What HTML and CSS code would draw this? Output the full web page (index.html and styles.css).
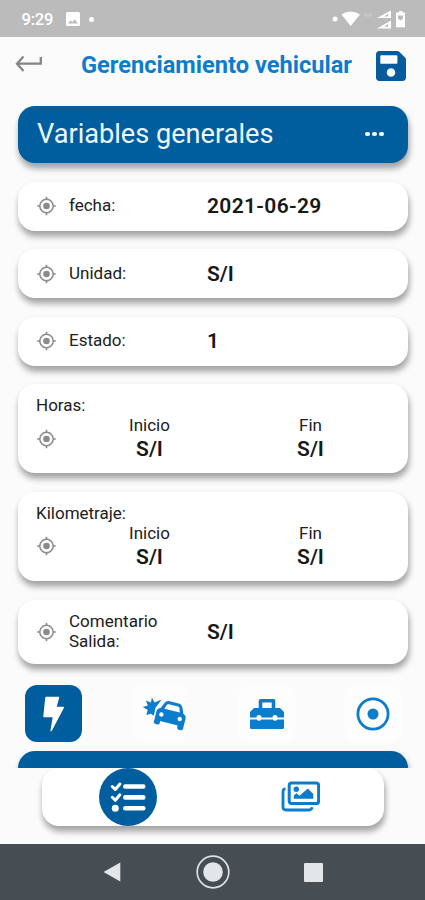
FILE: index.html
```html
<!DOCTYPE html>
<html lang="es">
<head>
<meta charset="utf-8">
<title>Gerenciamiento vehicular</title>
<link rel="stylesheet" href="styles.css">
</head>
<body>
<svg class="defs" width="0" height="0">
  <symbol id="target" viewBox="0 0 20 20">
    <circle cx="10.500" cy="10" r="6.700" fill="none" stroke="currentColor" stroke-width="1.500"/>
    <circle cx="10.500" cy="10" r="3.300" fill="currentColor"/>
    <path d="M10.500 .7v2.800M10.500 16.500v2.800M1.200 10h2.800M17 10h2.800" stroke="currentColor" stroke-width="1.600"/>
  </symbol>
</svg>
<div class="phone">
  <div class="status">
    <span class="clock">9:29</span>
    <svg class="picture" viewBox="0 0 14 14"><path fill="#fff" fill-rule="evenodd" d="M1.500 0h11Q14 0 14 1.500v11Q14 14 12.500 14h-11Q0 14 0 12.500v-11Q0 0 1.500 0zM2 11.500h10L8.700 7.300 6.300 10.200 4.500 8.300z"/></svg>
    <i class="dot"></i>
    <svg class="signals" viewBox="0 0 76 22">
      <g fill="#fff">
        <circle cx="5" cy="11" r="2.500"/>
        <path d="M11.500 6.500Q20.500 .5 30 6.500L20.700 18z"/>
        <path opacity=".2" d="M34 5.500h8v3h-8z"/>
        <path fill-rule="evenodd" d="M47 10L61 2.500v7.500zM54 8.500h4V5.700zM47 20.500l14-8v8zM54 18.800h4V16z"/>
        <path d="M66.500 4.500h2.500V3h3.500v1.500h2.500v14.700h-9V4.500z"/>
      </g>
      <path fill="#bbb" d="M68 7.500h5v3l-2.500 2-2.500-2z"/>
    </svg>
  </div>
  <header class="header">
    <svg class="back" viewBox="0 0 28 18"><path d="M8.500 1.500L2 8.700l6.500 7.200M2.300 8.700h23.500V2" fill="none" stroke="#858585" stroke-width="2.300"/></svg>
    <h1>Gerenciamiento vehicular</h1>
    <svg class="save" viewBox="0 32 448 448"><path fill="#075b9d" d="M433.900 129.900l-83.800-83.800A48 48 0 0 0 316.100 32H48C21.500 32 0 53.500 0 80v352c0 26.500 21.500 48 48 48h352c26.500 0 48-21.500 48-48V163.900a48 48 0 0 0-14.100-34zM224 416a64 64 0 1 1 0-128 64 64 0 0 1 0 128zm96-304.500V212a12 12 0 0 1-12 12H76a12 12 0 0 1-12-12V108a12 12 0 0 1 12-12h228.500l8.500 3.500 3.500 3.500a12 12 0 0 1 3.500 8.500z"/></svg>
  </header>
  <main class="content">
    <section class="banner">
      <h2>Variables generales</h2>
      <span class="more"><i></i><i></i><i></i></span>
    </section>
    <section class="card row"><svg class="target"><use href="#target"/></svg><span class="label">fecha:</span><b class="date">2021-06-29</b></section>
    <section class="card row"><svg class="target"><use href="#target"/></svg><span class="label">Unidad:</span><b>S/I</b></section>
    <section class="card row"><svg class="target"><use href="#target"/></svg><span class="label">Estado:</span><b>1</b></section>
    <section class="card range">
      <span class="range-title">Horas:</span>
      <svg class="target"><use href="#target"/></svg>
      <div class="value"><span>Inicio</span><b>S/I</b></div>
      <div class="value"><span>Fin</span><b>S/I</b></div>
    </section>
    <section class="card range">
      <span class="range-title">Kilometraje:</span>
      <svg class="target"><use href="#target"/></svg>
      <div class="value"><span>Inicio</span><b>S/I</b></div>
      <div class="value"><span>Fin</span><b>S/I</b></div>
    </section>
    <section class="card row tall"><svg class="target"><use href="#target"/></svg><span class="label">Comentario Salida:</span><b>S/I</b></section>
    <nav class="tabs">
      <span class="tab active"><svg width="24" height="36" viewBox="0 0 24 36"><path fill="#fff" stroke="#fff" stroke-width="1.500" stroke-linejoin="round" d="M4 1.500h12.500L13.700 11.500H21.300L9.200 34.500 11.500 20.500H2z"/></svg></span>
      <span class="tab crash"><svg width="46" height="38" viewBox="0 0 46 38">
        <path fill="#0c7dcc" d="M9.900 2.500L12.500 7.500l7-3-1.500 2.200-4.500 6-1.700 8-3-2L4.300 20l1.400-5L.8 12l5-1.500L3.900 5.500l5 2z"/>
        <g transform="translate(29 20) rotate(14)">
          <path fill="#0c7dcc" fill-rule="evenodd" d="M-9.500-9.500Q-8-13-4.500-13H4.500Q8-13 9.500-9.500L11.500-4.500Q15-3 15 0V10.500Q15 12.500 13 12.500H11Q9 12.500 9 10.500V8.500H-9V10.500Q-9 12.500-11 12.500H-13Q-15 12.500-15 10.500V0Q-15-3-11.500-4.500zM-4.800-10Q-6-10-6.400-9L-8-4.500H8L6.400-9Q6-10 4.800-10z"/>
          <circle cx="-9.500" cy="1.800" r="2.200" fill="#fff"/><circle cx="9.500" cy="1.800" r="2.200" fill="#fff"/>
        </g>
      </svg></span>
      <span class="tab"><svg width="36" height="32" viewBox="0 0 36 32">
        <path fill="none" stroke="#0c7dcc" stroke-width="3.600" stroke-linejoin="round" d="M11.500 11V2.800h13V11"/>
        <path fill="#0c7dcc" d="M5 10h26l4 4v5.500h-6.500a2.500 2.500 0 0 0-5 0h-11a2.500 2.500 0 0 0-5 0H1V14zM1 21.500h6.800a2.500 2.500 0 0 0 4.400 0h11.600a2.500 2.500 0 0 0 4.400 0H35v8q0 1.500-1.500 1.500h-31Q1 31 1 29.500z"/>
      </svg></span>
      <span class="tab"><svg width="34" height="34" viewBox="0 0 34 34"><circle cx="17" cy="17" r="15.100" fill="none" stroke="#0c7dcc" stroke-width="2.800"/><circle cx="17" cy="17" r="5.500" fill="#0c7dcc"/></svg></span>
    </nav>
    <section class="banner clipped"></section>
  </main>
  <div class="dock">
    <nav class="dock-card">
      <span class="dock-item"><span class="round"><svg width="36" height="30" viewBox="0 0 36 30">
        <g fill="none" stroke="#fff" stroke-linecap="round" stroke-linejoin="round"><path stroke-width="4.600" d="M15.300 4.500h18M15.300 15.400h18M15.300 26.200h18"/><path stroke-width="3" d="M2.300 4.500l3 3 4.600-5.500M2.300 15.300l3 3 4.600-5.500"/></g>
        <circle cx="5.300" cy="26.200" r="3.500" fill="#fff"/>
      </svg></span></span>
      <span class="dock-item photos"><svg width="39" height="31" viewBox="0 0 39 31">
        <rect x="8.200" y="1.900" width="29.400" height="20.700" rx="2.500" fill="none" stroke="#0c7dcc" stroke-width="3"/>
        <path d="M4.500 7.800Q2 7.800 2 10.500v15.500q0 3 3 3h23q2.600 0 3.200-2.700" fill="none" stroke="#0c7dcc" stroke-width="2.800"/>
        <circle cx="15.300" cy="8.200" r="2.700" fill="#0c7dcc"/>
        <path fill="#0c7dcc" d="M12.800 17.800V14.500L15.500 12.300l3 2.500L26.800 7.500l5.500 5.500v4.800z"/>
      </svg></span>
    </nav>
  </div>
  <footer class="system">
    <svg width="18" height="20" viewBox="0 0 18 20"><path fill="#e3e6e8" d="M17.300.5v19L.5 10z"/></svg>
    <svg width="34" height="34" viewBox="0 0 34 34"><circle cx="17" cy="17" r="15.800" fill="none" stroke="#dfe2e4" stroke-width="1.700"/><circle cx="17" cy="17" r="9.800" fill="#e3e6e8"/></svg>
    <svg width="19" height="19" viewBox="0 0 19 19"><rect width="19" height="19" rx="1" fill="#e3e6e8"/></svg>
  </footer>
</div>
</body>
</html>
```
FILE: styles.css
```css
* { box-sizing: border-box; }
body { margin: 0; font-family: Roboto, "Liberation Sans", sans-serif; color: #202020; }
h1, h2 { margin: 0; }
.defs { display: block; height: 0; }
svg { display: block; flex: none; }
.phone { width: 425px; height: 900px; display: flex; flex-direction: column; background: #fbfbfb; overflow: hidden; }

.status { flex: none; height: 37px; padding: 1px 19px 0 21.500px; display: flex; align-items: center; background: #bbb; color: #fff; }
.clock { width: 44.500px; font-size: 16.500px; font-weight: 500; letter-spacing: -.2px; }
.picture { width: 14px; height: 14px; }
.dot { width: 5px; height: 5px; margin-left: 9px; border-radius: 50%; background: #fff; }
.signals { width: 76px; height: 22px; margin-left: auto; }

.header { flex: none; height: 57px; padding: 0 19px 0 15px; display: flex; align-items: center; }
.back { width: 28px; height: 18px; margin-top: -3px; }
h1 { flex: 1; padding-left: 38px; margin-top: -2px; font-size: 23.600px; font-weight: 700; line-height: 30px; color: #0c7dcc; white-space: nowrap; }
.save { width: 30px; height: 30px; }

.content { flex: none; height: 673.500px; padding: 12px 17px 0 18px; overflow: hidden; display: flex; flex-direction: column; gap: 18.600px; }
.banner, .card { flex: none; border-radius: 17px; box-shadow: 1px 6px 6px rgba(0, 0, 0, .28), 1px 3px 6px rgba(0, 0, 0, .12); }
.banner { height: 57px; padding: 0 24px 1px 19px; display: flex; align-items: center; justify-content: space-between; background: #005e9f; color: #edf8ff; }
h2 { font-size: 27.150px; font-weight: 400; line-height: 32px; }
.more { display: flex; gap: 2.400px; }
.more i { width: 4.800px; height: 4.800px; border-radius: 50%; background: #fff; }
.card { background: #fff; }
.row { height: 49px; padding-left: 18px; display: flex; align-items: center; }
.target { width: 20px; height: 20px; color: #8b8b8b; }
.label { width: 151px; padding: 0 38px 2px 13px; font-size: 17px; line-height: 20px; }
b { font-size: 21px; font-weight: 600; line-height: 23px; color: #181818; }
.row b { padding-top: 1px; }
.date { letter-spacing: .33px; }
.tall { height: 64px; }
.range { height: 89px; padding: 11px 18px 0; display: grid; grid-template-columns: 32px 163px 159px; grid-template-rows: 20px 44px; }
.range-title { grid-column: 1 / -1; font-size: 17px; line-height: 20px; }
.range .target { align-self: center; margin-top: 3px; }
.value { display: flex; flex-direction: column; align-items: center; gap: 3px; font-size: 17px; line-height: 20px; }

.tabs { flex: none; height: 57px; margin: 2.800px 6px -9.500px 7px; display: flex; justify-content: space-between; }
.tab { width: 57px; height: 57px; padding-top: 1px; display: flex; align-items: center; justify-content: center; border-radius: 12px; background: #fdfdfd; }
.crash { padding-left: 9px; }
.active { background: #005e9f; }

.dock { flex: none; height: 76.500px; padding: 0 41px 0 42px; }
.dock-card { height: 58.500px; display: grid; grid-template-columns: 1fr 1fr; place-items: center; border-radius: 17px; background: #fff; box-shadow: 1px 6px 6px rgba(0, 0, 0, .28), 1px 3px 6px rgba(0, 0, 0, .12); }
.dock-item { padding-left: 1px; }
.photos { padding-left: 4px; }
.round { width: 58.500px; height: 58.500px; display: flex; align-items: center; justify-content: center; border-radius: 50%; background: #005e9f; }
.system { flex: none; height: 56px; padding: 0 102px 0 103px; display: flex; align-items: center; justify-content: space-between; background: #464d53; }
```
